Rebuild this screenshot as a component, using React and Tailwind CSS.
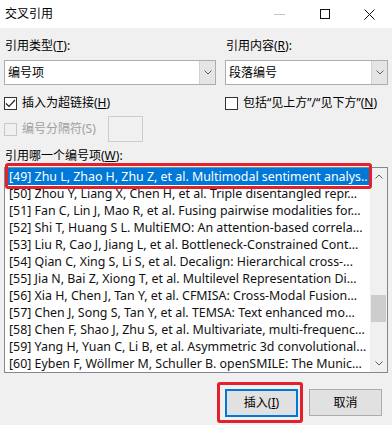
const refs = [
  '[49] Zhu L, Zhao H, Zhu Z, et al. Multimodal sentiment analys..',
  '[50] Zhou Y, Liang X, Chen H, et al. Triple disentangled repr...',
  '[51] Fan C, Lin J, Mao R, et al. Fusing pairwise modalities for...',
  '[52] Shi T, Huang S L. MultiEMO: An attention-based correla...',
  '[53] Liu R, Cao J, Jiang L, et al. Bottleneck-Constrained Cont...',
  '[54] Qian C, Xing S, Li S, et al. Decalign: Hierarchical cross-...',
  '[55] Jia N, Bai Z, Xiong T, et al. Multilevel Representation Di...',
  '[56] Xia H, Chen J, Tan Y, et al. CFMISA: Cross-Modal Fusion...',
  '[57] Chen J, Song S, Tan Y, et al. TEMSA: Text enhanced mo...',
  '[58] Chen F, Shao J, Zhu S, et al. Multivariate, multi-frequenc...',
  '[59] Yang H, Yuan C, Li B, et al. Asymmetric 3d convolutional...',
  '[60] Eyben F, Wöllmer M, Schuller B. openSMILE: The Munic...',
]

function Chevron({ up = false }) {
  return (
    <svg width="8" height="5" viewBox="0 0 8 5" className={up ? 'rotate-180' : ''}>
      <path d="M0.5 0.5 L4 4 L7.5 0.5" fill="none" stroke="#606060" strokeWidth="1" />
    </svg>
  )
}

function Combo({ value, width }) {
  return (
    <div className={`flex h-[25px] ${width} border border-[#adadad] bg-white`}>
      <div className="flex-1 pl-[3px] leading-[23px]">{value}</div>
      <div className="flex w-[16px] items-center justify-center border-l border-[#d0d0d0] bg-[#e5e5e5]">
        <Chevron />
      </div>
    </div>
  )
}

function CheckBox({ checked, disabled }) {
  return (
    <div
      className={`flex h-[13px] w-[13px] shrink-0 items-center justify-center border ${disabled ? 'border-[#c8c8c8] bg-[#f0f0f0]' : 'border-[#333333] bg-white'}`}
    >
      {checked && (
        <svg width="11" height="9" viewBox="0 0 11 9">
          <path d="M1 4.5 L4 7.5 L10 1" fill="none" stroke="#222" strokeWidth="1.2" />
        </svg>
      )}
    </div>
  )
}

export default function App() {
  return (
    <div
      className="relative h-[425px] w-[392px] overflow-hidden bg-[#f0f0f0] text-[12px] text-black"
      style={{ fontFamily: '"Noto Sans", "Noto Sans CJK SC", sans-serif' }}
    >
      {/* title bar */}
      <div className="flex h-[28px] items-center bg-white">
        <div className="pl-[5px] text-[12px]">交叉引用</div>
        <div className="ml-auto flex h-full items-center">
          <div className="flex w-[45px] justify-center">
            <div className="h-px w-[11px] bg-[#c4c4c4]" />
          </div>
          <div className="flex w-[45px] justify-center">
            <div className="h-[10px] w-[10px] border border-[#111]" />
          </div>
          <div className="flex w-[45px] justify-center">
            <svg width="11" height="11" viewBox="0 0 11 11">
              <path d="M0.5 0.5 L10.5 10.5 M10.5 0.5 L0.5 10.5" stroke="#111" strokeWidth="1" />
            </svg>
          </div>
        </div>
      </div>

      <div className="px-[4px] pt-[10px]">
        <div className="flex gap-[9px]">
          <div className="flex flex-col gap-[6px]">
            <div className="h-[16px] pl-[1px] leading-[16px]">
              引用类型(<u>T</u>):
            </div>
            <Combo value="编号项" width="w-[212px]" />
          </div>
          <div className="flex flex-col gap-[6px]">
            <div className="h-[16px] pl-[1px] leading-[16px]">
              引用内容(<u>R</u>):
            </div>
            <Combo value="段落编号" width="w-[163px]" />
          </div>
        </div>

        <div className="mt-[10px] flex h-[16px] items-center">
          <div className="flex w-[221px] items-center gap-[5px]">
            <CheckBox checked />
            <span className="leading-[16px]">
              插入为超链接(<u>H</u>)
            </span>
          </div>
          <div className="flex items-center gap-[5px] whitespace-nowrap">
            <CheckBox />
            <span className="leading-[16px]">
              包括“见上方”/“见下方”(<u>N</u>)
            </span>
          </div>
        </div>

        <div className="mt-[5px] flex h-[26px] items-center">
          <div className="flex w-[104px] items-center gap-[5px]">
            <CheckBox disabled />
            <span className="leading-[16px] text-[#a0a0a0]">编号分隔符(S)</span>
          </div>
          <div className="h-[26px] w-[35px] border border-[#cccccc] bg-[#f0f0f0]" />
        </div>

        <div className="mt-[6px] h-[16px] pl-[1px] leading-[16px]">
          引用哪一个编号项(<u>W</u>):
        </div>

        <div className="relative mt-[3px] flex h-[206px] w-[384px] border border-[#828790] bg-white">
          <div className="min-w-0 flex-1 overflow-hidden pl-[2px]">
            {refs.map((r, i) => (
              <div
                key={r}
                className={`h-[17px] whitespace-nowrap pl-[2px] text-[12.4px] leading-[17px] ${i === 0 ? 'bg-[#0078d7] text-white' : 'text-[#111]'}`}
              >
                {r}
              </div>
            ))}
          </div>
          <div className="flex w-[17px] shrink-0 flex-col items-center bg-[#f0f0f0]">
            <div className="flex h-[17px] items-center justify-center">
              <Chevron up />
            </div>
            <div className="mt-[110px] h-[27px] w-[15px] bg-[#cdcdcd]" />
            <div className="mt-auto flex h-[17px] items-center justify-center">
              <Chevron />
            </div>
          </div>
          <div className="absolute left-0 top-[-5px] h-[26px] w-[367px] rounded-[3px] border-[3px] border-[#e3202c]" />
        </div>

        <div className="mt-[16px] flex justify-end gap-[11px] pr-[6px]">
          <div className="relative">
            <button className="h-[28px] w-[73px] border-2 border-[#0078d7] bg-[#e1e1e1] text-[12px]">
              插入(<u>I</u>)
            </button>
            <div className="absolute left-[-8px] top-[-7px] h-[41px] w-[86px] rounded-[3px] border-[3px] border-[#e3202c]" />
          </div>
          <button className="h-[27px] w-[73px] border border-[#adadad] bg-[#e1e1e1] text-[12px]">
            取消
          </button>
        </div>
      </div>
    </div>
  )
}
